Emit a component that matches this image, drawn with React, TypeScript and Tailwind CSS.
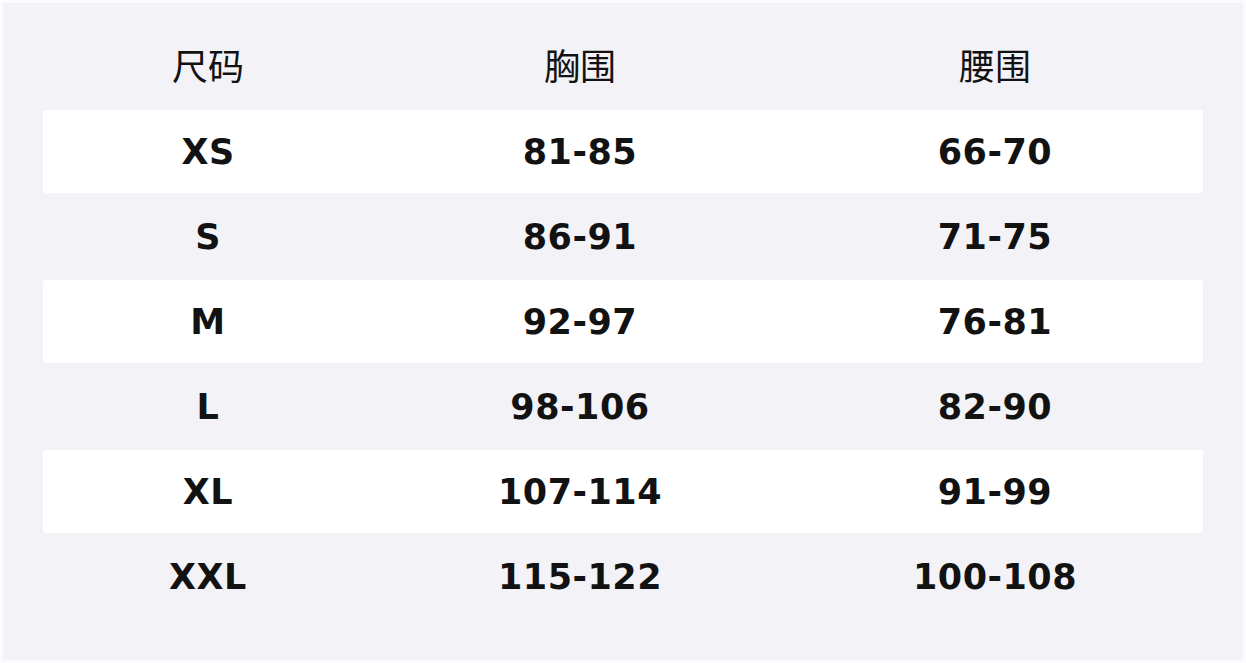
const ROWS = [
  { size: 'XS', chest: '81-85', waist: '66-70' },
  { size: 'S', chest: '86-91', waist: '71-75' },
  { size: 'M', chest: '92-97', waist: '76-81' },
  { size: 'L', chest: '98-106', waist: '82-90' },
  { size: 'XL', chest: '107-114', waist: '91-99' },
  { size: 'XXL', chest: '115-122', waist: '100-108' },
]

const COLS = 'grid grid-cols-[330px_414px_416px]'

const App = () => {
  return (
    <div className="w-[1246px] h-[663px] bg-[#fbfbfd] p-[3px]">
      <div className="w-[1240px] h-[657px] bg-[#f2f2f7] px-10 pt-[21px] text-[#121212]">
        <div className={`${COLS} h-[86px] pb-[6px] items-center text-center text-[36px] font-normal font-['Noto_Sans_CJK_SC',sans-serif]`}>
          <div>尺码</div>
          <div>胸围</div>
          <div>腰围</div>
        </div>
        {ROWS.map((row, i) => (
          <div
            key={row.size}
            className={`${COLS} pt-[2px] items-center text-center text-[35px] tracking-[0.5px] font-bold font-['DejaVu_Sans',sans-serif] ${
              i % 2 === 0 ? 'h-[83px] bg-white rounded-[3px]' : 'h-[87px]'
            }`}
          >
            <div>{row.size}</div>
            <div>{row.chest}</div>
            <div>{row.waist}</div>
          </div>
        ))}
      </div>
    </div>
  )
}

export default App
